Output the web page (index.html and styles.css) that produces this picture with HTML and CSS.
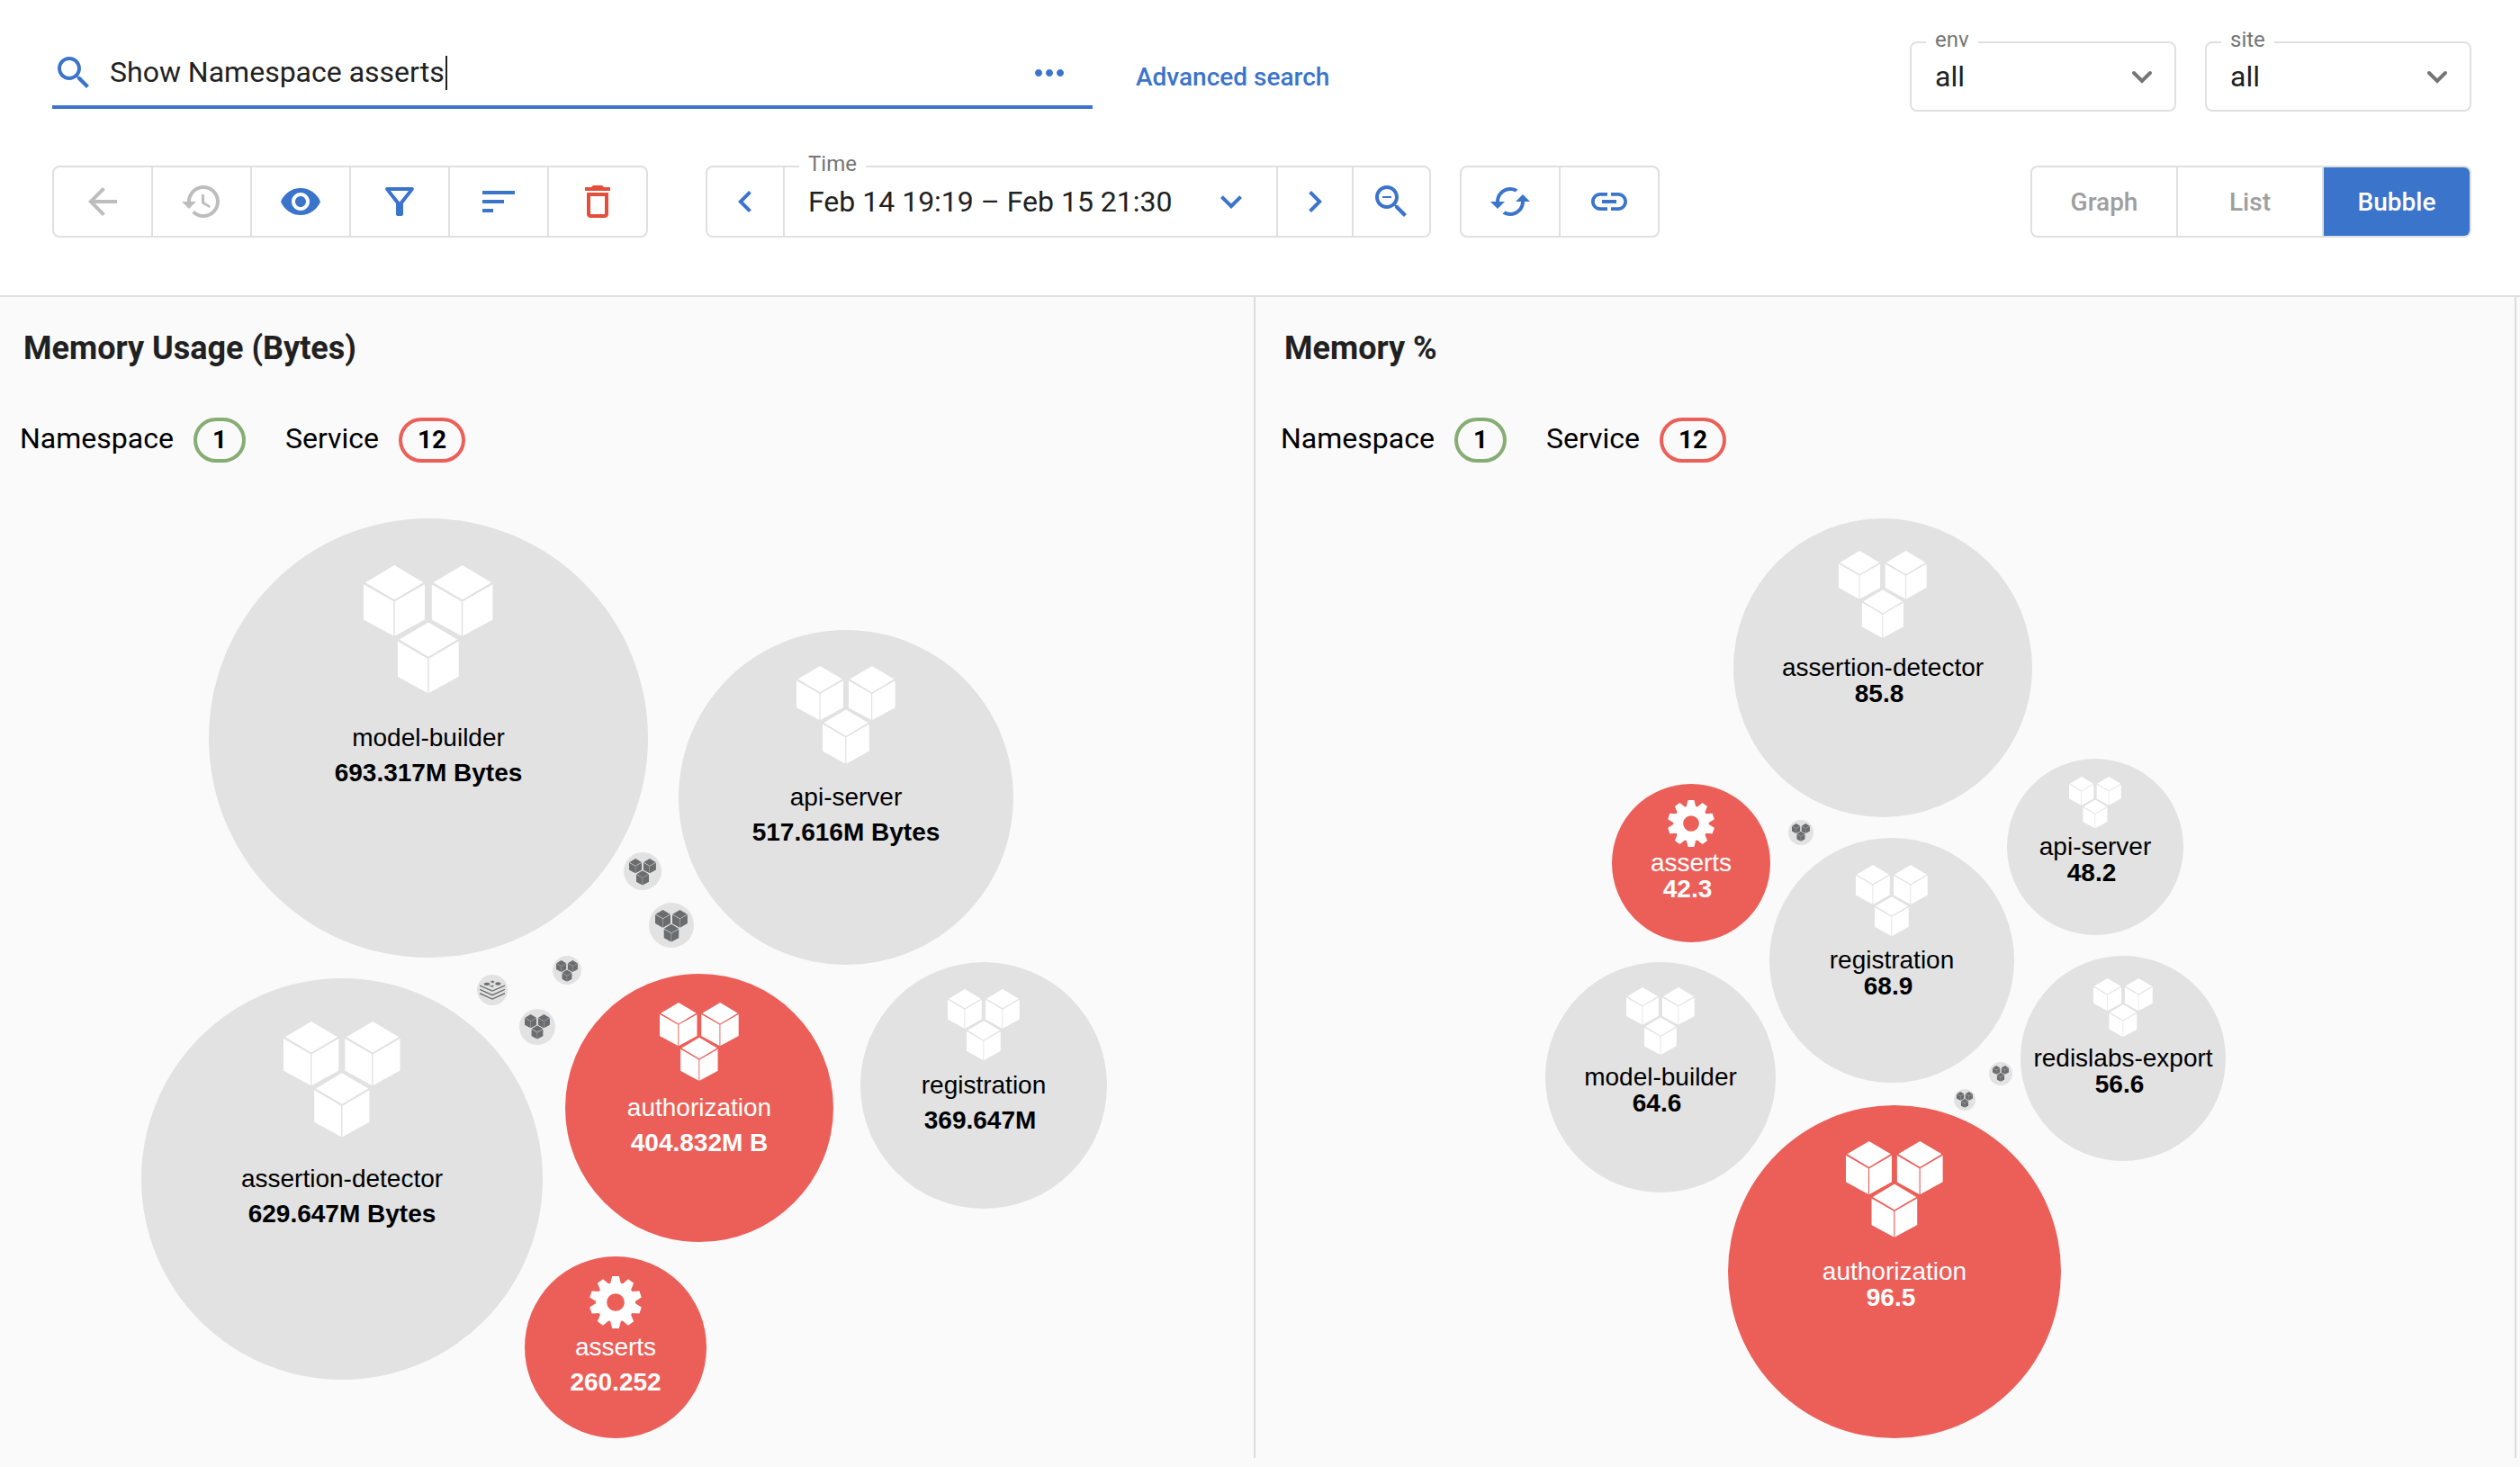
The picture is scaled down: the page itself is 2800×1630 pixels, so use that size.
FILE: index.html
```html
<!DOCTYPE html>
<html lang="en">
<head>
<meta charset="utf-8">
<title>Top Insights</title>
<meta name="viewport" content="width=device-width, initial-scale=1">
<link rel="stylesheet" href="styles.css">
</head>
<body>
<svg class="sprite" aria-hidden="true">
  <symbol id="cube" viewBox="0 0 68 79">
    <path d="M34 0 66 19 34 38 2 19z M0 21 33 40V78L0 60z M34.500 40 67.500 21V60L34.500 78z"/>
  </symbol>
  <symbol id="cubes" viewBox="0 0 143 143">
    <use href="#cube" x="0" y="0" width="68" height="79"/>
    <use href="#cube" x="75" y="0" width="68" height="79"/>
    <use href="#cube" x="37.500" y="63" width="68" height="79"/>
  </symbol>
  <symbol id="gear" viewBox="-100 -100 200 200">
    <circle r="55" fill="none" stroke="currentColor" stroke-width="42"/>
    <g id="teeth">
      <path id="tooth" d="M-20-72-13-100H13L20-72z"/>
      <use href="#tooth" transform="rotate(36)"/>
      <use href="#tooth" transform="rotate(72)"/>
      <use href="#tooth" transform="rotate(108)"/>
      <use href="#tooth" transform="rotate(144)"/>
    </g>
    <use href="#teeth" transform="rotate(180)"/>
  </symbol>
  <symbol id="layers" viewBox="0 0 84 64">
    <path d="M0 17 42 35 84 17M0 30 42 49 84 30M0 43 42 62 84 43" fill="none" stroke="currentColor" stroke-width="4"/>
    <ellipse cx="24" cy="12" rx="10" ry="5"/>
    <ellipse cx="61" cy="11" rx="9" ry="5"/>
    <path d="M34 2l6 1 3-3 2 3 6 0-5 3 1 4-5-3-5 1 2-3zM32 18l17-2-7 7z"/>
  </symbol>
</svg>

<header class="header">
  <div class="row">
    <div class="search">
      <svg class="icon" viewBox="0 0 24 24" aria-hidden="true"><path d="M15.500 14h-.79l-.28-.27C15.410 12.590 16 11.110 16 9.500 16 5.910 13.090 3 9.500 3S3 5.910 3 9.500 5.910 16 9.500 16c1.610 0 3.090-.59 4.230-1.570l.27.28v.79l5 4.990L20.490 19l-4.990-5zm-6 0C7.010 14 5 11.990 5 9.500S7.010 5 9.500 5 14 7.010 14 9.500 11.990 14 9.500 14z"/></svg>
      <input class="search-input" type="text" value="Show Namespace asserts" aria-label="Search">
      <span class="caret"></span>
      <button class="more" type="button" aria-label="More options">
        <svg class="icon" viewBox="0 0 24 24" aria-hidden="true"><path d="M6 10c-1.100 0-2 .9-2 2s.9 2 2 2 2-.9 2-2-.9-2-2-2zm12 0c-1.100 0-2 .9-2 2s.9 2 2 2 2-.9 2-2-.9-2-2-2zm-6 0c-1.100 0-2 .9-2 2s.9 2 2 2 2-.9 2-2-.9-2-2-2z"/></svg>
      </button>
    </div>
    <a class="advanced" href="#advanced">Advanced search</a>
    <div class="filters">
      <div class="field">
        <label class="field-label" for="env">env</label>
        <select class="select" id="env"><option>all</option></select>
        <svg class="select-arrow" viewBox="0 0 24 24" aria-hidden="true"><path d="M3 8l9 9 9-9"/></svg>
      </div>
      <div class="field">
        <label class="field-label" for="site">site</label>
        <select class="select" id="site"><option>all</option></select>
        <svg class="select-arrow" viewBox="0 0 24 24" aria-hidden="true"><path d="M3 8l9 9 9-9"/></svg>
      </div>
    </div>
  </div>

  <div class="row toolbar">
    <div class="group tools">
      <button type="button" class="muted" aria-label="Back"><svg class="icon" viewBox="0 0 24 24"><path d="M20 11H7.830l5.590-5.590L12 4l-8 8 8 8 1.410-1.410L7.830 13H20v-2z"/></svg></button>
      <button type="button" class="muted" aria-label="History"><svg class="icon" viewBox="0 0 24 24"><path d="M13 3c-4.970 0-9 4.030-9 9H1l3.890 3.890.07.14L9 12H6c0-3.870 3.130-7 7-7s7 3.130 7 7-3.130 7-7 7c-1.930 0-3.680-.79-4.940-2.060l-1.420 1.420C8.270 19.990 10.510 21 13 21c4.970 0 9-4.030 9-9s-4.030-9-9-9zm-1 5v5l4.280 2.540.72-1.210-3.500-2.080V8H12z"/></svg></button>
      <button type="button" aria-label="Visibility"><svg class="icon" viewBox="0 0 24 24"><path d="M12 4.500C7 4.500 2.730 7.610 1 12c1.730 4.390 6 7.500 11 7.500s9.270-3.110 11-7.500c-1.730-4.390-6-7.500-11-7.500zM12 17c-2.760 0-5-2.240-5-5s2.240-5 5-5 5 2.240 5 5-2.240 5-5 5zm0-8c-1.660 0-3 1.340-3 3s1.340 3 3 3 3-1.340 3-3-1.340-3-3-3z"/></svg></button>
      <button type="button" aria-label="Filter"><svg class="icon" viewBox="0 0 24 24"><path d="M7 6h10l-5.010 6.300L7 6zm-2.750-.39C6.270 8.200 10 13 10 13v6c0 .55.45 1 1 1h2c.55 0 1-.45 1-1v-6s3.720-4.800 5.740-7.390c.51-.66.04-1.610-.79-1.610H5.040c-.83 0-1.300.95-.79 1.610z"/></svg></button>
      <button type="button" aria-label="Sort"><svg class="icon" viewBox="0 0 24 24"><path d="M3 18h6v-2H3v2zM3 6v2h18V6H3zm0 7h12v-2H3v2z"/></svg></button>
      <button type="button" class="danger" aria-label="Delete"><svg class="icon" viewBox="0 0 24 24"><path d="M6 19c0 1.100.9 2 2 2h8c1.100 0 2-.9 2-2V7H6v12zM8 9h8v10H8V9zm7.500-5l-1-1h-5l-1 1H5v2h14V4z"/></svg></button>
    </div>

    <div class="group range">
      <button type="button" aria-label="Earlier"><svg class="icon" viewBox="0 0 24 24"><path d="M15.410 7.410L14 6l-6 6 6 6 1.410-1.410L10.830 12z"/></svg></button>
      <div class="time">
        <label class="field-label" for="time">Time</label>
        <button type="button" class="time-value" id="time">
          <span>Feb 14 19:19 – Feb 15 21:30</span>
          <svg class="icon" viewBox="0 0 24 24"><path d="M16.590 8.590L12 13.170 7.410 8.590 6 10l6 6 6-6z"/></svg>
        </button>
      </div>
      <button type="button" aria-label="Later"><svg class="icon" viewBox="0 0 24 24"><path d="M10 6L8.590 7.410 13.170 12l-4.580 4.590L10 18l6-6z"/></svg></button>
      <button type="button" aria-label="Zoom out"><svg class="icon" viewBox="0 0 24 24"><path d="M15.500 14h-.79l-.28-.27C15.410 12.590 16 11.110 16 9.500 16 5.910 13.090 3 9.500 3S3 5.910 3 9.500 5.910 16 9.500 16c1.610 0 3.090-.59 4.230-1.570l.27.28v.79l5 4.990L20.490 19l-4.990-5zm-6 0C7.010 14 5 11.990 5 9.500S7.010 5 9.500 5 14 7.010 14 9.500 11.990 14 9.500 14zM7 9h5v1H7z"/></svg></button>
    </div>

    <div class="group tools actions">
      <button type="button" aria-label="Refresh"><svg class="icon" viewBox="0 0 24 24"><path d="M19 8l-4 4h3c0 3.310-2.690 6-6 6-1.010 0-1.970-.25-2.800-.7l-1.460 1.460C8.970 19.540 10.430 20 12 20c4.420 0 8-3.580 8-8h3l-4-4zM6 12c0-3.310 2.690-6 6-6 1.010 0 1.970.25 2.800.7l1.460-1.460C15.030 4.460 13.570 4 12 4c-4.420 0-8 3.580-8 8H1l4 4 4-4H6z"/></svg></button>
      <button type="button" aria-label="Copy link"><svg class="icon" viewBox="0 0 24 24"><path d="M3.900 12c0-1.710 1.390-3.100 3.100-3.100h4V7H7c-2.760 0-5 2.240-5 5s2.240 5 5 5h4v-1.900H7c-1.710 0-3.100-1.390-3.100-3.100zM8 13h8v-2H8v2zm9-6h-4v1.900h4c1.710 0 3.100 1.390 3.100 3.100s-1.390 3.100-3.100 3.100h-4V17h4c2.760 0 5-2.240 5-5s-2.240-5-5-5z"/></svg></button>
    </div>

    <div class="group views">
      <button type="button">Graph</button>
      <button type="button">List</button>
      <button type="button" class="selected" aria-pressed="true">Bubble</button>
    </div>
  </div>
</header>

<main class="panels">
  <section class="panel">
    <h2 class="title">Memory Usage (Bytes)</h2>
    <div class="legend">
      <span>Namespace</span><span class="pill ok">1</span>
      <span class="legend-next">Service</span><span class="pill bad">12</span>
    </div>
    <svg class="chart" viewBox="0 0 1399 1084">
      <g class="bubble" transform="translate(482 284)">
        <circle r="244"/><use href="#cubes" x="-72" y="-192" width="144" height="144"/>
        <text y="9">model-builder</text><text class="value" y="48">693.317M Bytes</text>
      </g>
      <g class="bubble" transform="translate(946 350)">
        <circle r="186"/><use href="#cubes" x="-55" y="-146" width="110" height="110"/>
        <text y="9">api-server</text><text class="value" y="48">517.616M Bytes</text>
      </g>
      <g class="bubble" transform="translate(386 774)">
        <circle r="223"/><use href="#cubes" x="-65" y="-175" width="130" height="130"/>
        <text y="9">assertion-detector</text><text class="value" y="48">629.647M Bytes</text>
      </g>
      <g class="bubble alert" transform="translate(783 695)">
        <circle r="149"/><use href="#cubes" x="-44" y="-117" width="88" height="88"/>
        <text y="9">authorization</text><text class="value" y="48">404.832M B</text>
      </g>
      <g class="bubble" transform="translate(1099 670)">
        <circle r="137"/><use href="#cubes" x="-40" y="-107" width="80" height="80"/>
        <text y="9">registration</text><text class="value" x="-4" y="48">369.647M</text>
      </g>
      <g class="bubble alert" transform="translate(690 961)">
        <circle r="101"/><use href="#gear" x="-29" y="-79" width="58" height="58"/>
        <text y="9">asserts</text><text class="value" y="48">260.252</text>
      </g>
      <g class="bubble small" transform="translate(720 432)"><circle r="21"/><use href="#cubes" x="-15" y="-14" width="30" height="30"/></g>
      <g class="bubble small" transform="translate(752 492)"><circle r="25"/><use href="#cubes" x="-18" y="-17" width="36" height="36"/></g>
      <g class="bubble small" transform="translate(636 542)"><circle r="16"/><use href="#cubes" x="-12" y="-11" width="24" height="24"/></g>
      <g class="bubble small" transform="translate(553 564)"><circle r="17"/><use href="#layers" x="-14" y="-11" width="28" height="22"/></g>
      <g class="bubble small" transform="translate(603 605)"><circle r="20"/><use href="#cubes" x="-14" y="-14" width="28" height="28"/></g>
    </svg>
  </section>

  <section class="panel">
    <h2 class="title">Memory %</h2>
    <div class="legend">
      <span>Namespace</span><span class="pill ok">1</span>
      <span class="legend-next">Service</span><span class="pill bad">12</span>
    </div>
    <svg class="chart" viewBox="0 0 1399 1084">
      <g class="bubble" transform="translate(697 206)">
        <circle r="166"/><use href="#cubes" x="-49" y="-130" width="98" height="98"/>
        <text y="9">assertion-detector</text><text class="value" x="-4" y="38">85.8</text>
      </g>
      <g class="bubble alert" transform="translate(484 423)">
        <circle r="88"/><use href="#gear" x="-26" y="-70" width="52" height="52"/>
        <text y="9">asserts</text><text class="value" x="-4" y="38">42.3</text>
      </g>
      <g class="bubble" transform="translate(707 531)">
        <circle r="136"/><use href="#cubes" x="-40" y="-106" width="80" height="80"/>
        <text y="9">registration</text><text class="value" x="-4" y="38">68.9</text>
      </g>
      <g class="bubble" transform="translate(933 405)">
        <circle r="98"/><use href="#cubes" x="-29" y="-78" width="58" height="58"/>
        <text y="9">api-server</text><text class="value" x="-4" y="38">48.2</text>
      </g>
      <g class="bubble" transform="translate(450 661)">
        <circle r="128"/><use href="#cubes" x="-38" y="-100" width="76" height="76"/>
        <text y="9">model-builder</text><text class="value" x="-4" y="38">64.6</text>
      </g>
      <g class="bubble" transform="translate(964 640)">
        <circle r="114"/><use href="#cubes" x="-33" y="-89" width="66" height="66"/>
        <text y="9">redislabs-export</text><text class="value" x="-4" y="38">56.6</text>
      </g>
      <g class="bubble alert" transform="translate(710 877)">
        <circle r="185"/><use href="#cubes" x="-54" y="-145" width="108" height="108"/>
        <text y="9">authorization</text><text class="value" x="-4" y="38">96.5</text>
      </g>
      <g class="bubble small" transform="translate(606 389)"><circle r="14"/><use href="#cubes" x="-10" y="-10" width="20" height="20"/></g>
      <g class="bubble small" transform="translate(828 657)"><circle r="13"/><use href="#cubes" x="-9" y="-9" width="18" height="18"/></g>
      <g class="bubble small" transform="translate(788 686)"><circle r="12"/><use href="#cubes" x="-9" y="-9" width="18" height="18"/></g>
    </svg>
  </section>
</main>
</body>
</html>
```
FILE: styles.css
```css
* { box-sizing: border-box; }

body {
  margin: 0;
  min-height: 100vh;
  background: #fafafa;
  color: #212121;
  font-family: Roboto, "Liberation Sans", sans-serif;
  font-size: 32px;
}

button, input, select { font: inherit; color: inherit; }

button {
  padding: 0;
  border: 0;
  background: none;
  cursor: pointer;
}

.sprite { position: absolute; width: 0; height: 0; }

.icon {
  flex: none;
  display: block;
  width: 48px;
  height: 48px;
  fill: currentColor;
}

/* Header */
.header {
  display: flex;
  flex-direction: column;
  gap: 60px;
  padding: 46px 54px 64px 58px;
  border-bottom: 2px solid #e0e0e0;
  background: #fff;
}

.row { display: flex; align-items: center; }

.search {
  flex: 0 1 1156px;
  display: flex;
  align-items: center;
  height: 72px;
  padding: 8px 24px 12px 0;
  border-bottom: 4px solid #3b74cb;
}

.search > .icon { color: #3b74cb; }

.search-input {
  flex: 0 1 373px;
  min-width: 0;
  margin-left: 16px;
  height: 46px;
  margin-bottom: 2px;
  padding: 0;
  border: 0;
  outline: 0;
  background: none;
}

.caret { width: 2px; height: 38px; background: #212121; }

.more { margin-left: auto; color: #3b74cb; }

.advanced {
  margin-left: 48px;
  color: #3b74cb;
  font-size: 28px;
  font-weight: 500;
  text-decoration: none;
}

.filters { display: flex; gap: 32px; margin-left: auto; }

.field { position: relative; width: 296px; }

.field-label {
  position: absolute;
  top: -14px;
  left: 18px;
  padding: 0 10px;
  background: #fff;
  color: #757575;
  font-size: 24px;
  line-height: 24px;
}

.select {
  display: block;
  width: 100%;
  height: 78px;
  padding: 0 64px 0 26px;
  border: 2px solid #e0e0e0;
  border-radius: 8px;
  background: #fff;
  appearance: none;
}

.select-arrow {
  position: absolute;
  top: 27px;
  right: 26px;
  width: 24px;
  height: 24px;
  fill: none;
  stroke: #757575;
  stroke-width: 4;
  stroke-linecap: round;
  pointer-events: none;
}

/* Toolbar */
.group {
  display: flex;
  height: 80px;
  border: 2px solid #e0e0e0;
  border-radius: 8px;
  color: #3b74cb;
}

.group > button {
  display: flex;
  align-items: center;
  justify-content: center;
}

.group > * + * { border-left: 2px solid #e0e0e0; }

.tools > button { width: 110px; }
.tools > button:first-child { width: 108px; }

.muted { color: #bdbdbd; }
.danger { color: #e44f3c; }

.range { margin-left: 64px; }
.range > button { width: 84px; }
.range > button:last-child { width: 86px; }

.time { position: relative; width: 548px; }
.time .field-label { top: -16px; left: 16px; }

.time-value {
  display: flex;
  align-items: center;
  justify-content: space-between;
  width: 100%;
  height: 100%;
  padding: 0 26px;
}

.time-value span { color: #212121; }

.actions { margin-left: 32px; }

.views {
  display: grid;
  grid-template-columns: 160px 162px 164px;
  margin-left: auto;
  overflow: hidden;
  color: #9e9e9e;
  font-size: 28px;
  font-weight: 500;
}

.views .selected { background: #3b74cb; color: #fff; }

/* Panels */
.panels {
  display: grid;
  grid-template-columns: 1fr 1fr;
  margin: 0 4px 0 -6px;
}

.panel {
  padding-top: 33px;
  border-right: 2px solid #dcdcdc;
}

.title {
  margin: 0;
  padding-left: 32px;
  font-size: 36px;
  font-weight: 700;
  line-height: 48px;
}

.legend {
  display: flex;
  align-items: baseline;
  gap: 22px;
  margin-top: 53px;
  padding-left: 28px;
  color: #000;
}

.legend-next { margin-left: 22px; }

.pill {
  padding: 0 17px;
  border: 4px solid;
  border-radius: 25px;
  font-size: 28px;
  font-weight: 700;
  line-height: 42px;
}

.ok { border-color: #86ad73; }
.bad { border-color: #ec5f59; }

.chart {
  display: block;
  width: 100%;
  margin-top: 22px;
  font-family: "Liberation Sans", Arial, sans-serif;
  font-size: 28px;
  text-anchor: middle;
}

.bubble { color: #fff; }
.bubble circle { fill: #e2e2e2; }
.bubble use { fill: currentColor; }
.bubble text { fill: #000; }
.bubble .value { font-weight: 700; }

.alert circle { fill: #ec5f59; }
.alert text { fill: #fff; }
.small { color: #6b6c6e; }
```
